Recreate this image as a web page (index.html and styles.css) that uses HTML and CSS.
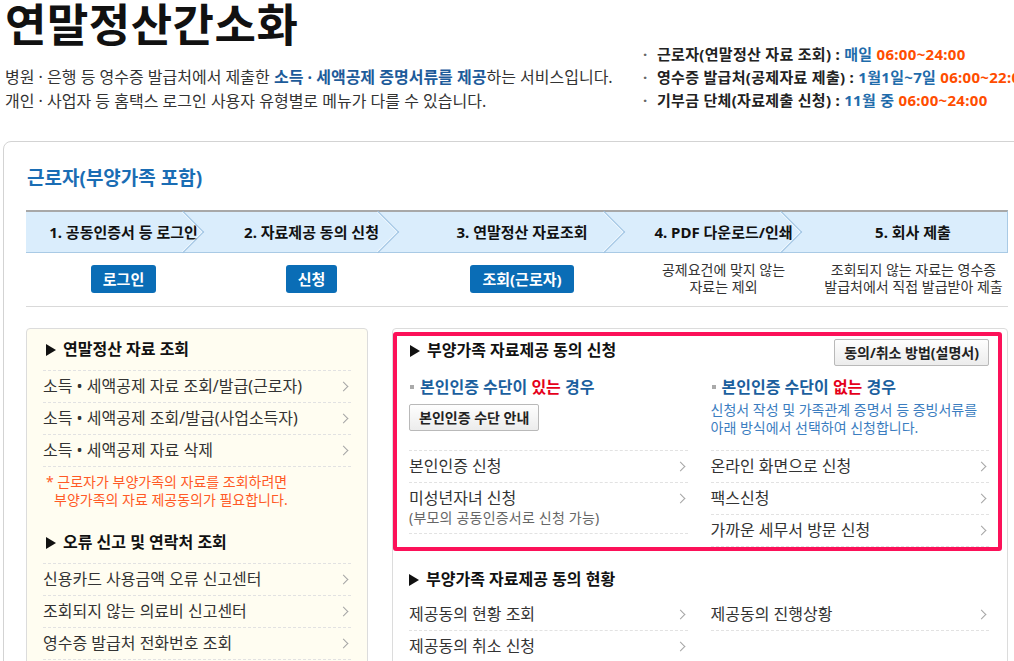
FILE: index.html
```html
<!DOCTYPE html>
<html lang="ko">
<head>
    <meta charset="UTF-8">
    <meta name="viewport" content="width=device-width, initial-scale=1.0">
    <title>연말정산간소화</title>
    <link rel="stylesheet" href="styles.css">
</head>
<body>
    <div class="page">
        <header class="top">
            <div class="intro">
                <h1>연말정산간소화</h1>
                <p>병원 · 은행 등 영수증 발급처에서 제출한 <strong>소득 · 세액공제 증명서류를 제공</strong>하는 서비스입니다.<br>
                개인 · 사업자 등 홈택스 로그인 사용자 유형별로 메뉴가 다를 수 있습니다.</p>
            </div>
            <ul class="hours">
                <li>근로자(연말정산 자료 조회) : <span class="day">매일</span> <span class="time">06:00~24:00</span></li>
                <li>영수증 발급처(공제자료 제출) : <span class="day">1월1일~7일</span> <span class="time">06:00~22:00</span></li>
                <li>기부금 단체(자료제출 신청) : <span class="day">11월 중</span> <span class="time">06:00~24:00</span></li>
            </ul>
        </header>

        <section class="box">
            <h2>근로자(부양가족 포함)</h2>

            <div class="steps">
                <div class="step">
                    <div class="step-label">1. 공동인증서 등 로그인</div>
                    <div class="step-act"><a class="btn-blue" href="#">로그인</a></div>
                </div>
                <div class="step">
                    <div class="step-label">2. 자료제공 동의 신청</div>
                    <div class="step-act"><a class="btn-blue" href="#">신청</a></div>
                </div>
                <div class="step">
                    <div class="step-label">3. 연말정산 자료조회</div>
                    <div class="step-act"><a class="btn-blue" href="#">조회(근로자)</a></div>
                </div>
                <div class="step">
                    <div class="step-label">4. PDF 다운로드/인쇄</div>
                    <div class="step-act"><p class="step-note">공제요건에 맞지 않는<br>자료는 제외</p></div>
                </div>
                <div class="step last">
                    <div class="step-label">5. 회사 제출</div>
                    <div class="step-act"><p class="step-note">조회되지 않는 자료는 영수증<br>발급처에서 직접 발급받아 제출</p></div>
                </div>
            </div>

            <div class="panels">
                <div class="panel panel-left">
                    <h3><span class="tri"></span>연말정산 자료 조회</h3>
                    <ul class="links bordered">
                        <li><a href="#">소득 • 세액공제 자료 조회/발급(근로자)</a></li>
                        <li><a href="#">소득 • 세액공제 조회/발급(사업소득자)</a></li>
                        <li><a href="#">소득 • 세액공제 자료 삭제</a></li>
                    </ul>
                    <p class="warn">* 근로자가 부양가족의 자료를 조회하려면<br>부양가족의 자료 제공동의가 필요합니다.</p>

                    <h3><span class="tri"></span>오류 신고 및 연락처 조회</h3>
                    <ul class="links bordered">
                        <li><a href="#">신용카드 사용금액 오류 신고센터</a></li>
                        <li><a href="#">조회되지 않는 의료비 신고센터</a></li>
                        <li><a href="#">영수증 발급처 전화번호 조회</a></li>
                    </ul>
                </div>

                <div class="panel panel-right">
                    <div class="consent highlight">
                        <div class="consent-head">
                            <h3><span class="tri"></span>부양가족 자료제공 동의 신청</h3>
                            <a class="btn-gray" href="#">동의/취소 방법(설명서)</a>
                        </div>
                        <div class="cols">
                            <div class="col">
                                <div class="case-head">
                                    <h4>본인인증 수단이 <em>있는</em> 경우</h4>
                                    <a class="btn-gray" href="#">본인인증 수단 안내</a>
                                </div>
                                <ul class="links bordered">
                                    <li><a href="#">본인인증 신청</a></li>
                                    <li><a href="#">미성년자녀 신청<small>(부모의 공동인증서로 신청 가능)</small></a></li>
                                </ul>
                            </div>
                            <div class="col">
                                <div class="case-head">
                                    <h4>본인인증 수단이 <em>없는</em> 경우</h4>
                                    <p class="case-desc">신청서 작성 및 가족관계 증명서 등 증빙서류를<br>아래 방식에서 선택하여 신청합니다.</p>
                                </div>
                                <ul class="links bordered">
                                    <li><a href="#">온라인 화면으로 신청</a></li>
                                    <li><a href="#">팩스신청</a></li>
                                    <li><a href="#">가까운 세무서 방문 신청</a></li>
                                </ul>
                            </div>
                        </div>
                    </div>

                    <div class="consent status">
                        <h3><span class="tri"></span>부양가족 자료제공 동의 현황</h3>
                        <div class="cols">
                            <ul class="links">
                                <li><a href="#">제공동의 현황 조회</a></li>
                                <li><a href="#">제공동의 취소 신청</a></li>
                            </ul>
                            <ul class="links">
                                <li><a href="#">제공동의 진행상황</a></li>
                            </ul>
                        </div>
                    </div>
                </div>
            </div>
        </section>
    </div>
</body>
</html>
```

FILE: styles.css
```css
html, body {
    margin: 0;
    padding: 0;
    overflow: hidden;
}
body {
    font-family: "Noto Sans", "Noto Sans CJK KR", sans-serif;
    color: #333;
    background-color: #fff;
}
a {
    color: inherit;
    text-decoration: none;
}
ul {
    list-style: none;
    margin: 0;
    padding: 0;
}
.page {
    width: 1040px;
}

/* header */
.top {
    display: flex;
}
.intro {
    width: 636px;
    padding-left: 5px;
}
h1 {
    margin: 0;
    font-size: 45px;
    line-height: 50px;
    font-weight: bold;
    color: #111;
    letter-spacing: 0.5px;
}
.intro p {
    margin: 15px 0 0;
    font-size: 16px;
    line-height: 24px;
    color: #333;
}
.intro strong {
    color: #1d5b9a;
}
.hours {
    margin-top: 43px;
    white-space: nowrap;
    font-size: 15px;
    line-height: 23px;
    font-weight: bold;
    color: #222;
    letter-spacing: 0.3px;
}
.hours li::before {
    content: "·";
    display: inline-block;
    width: 14px;
    padding-left: 2px;
    color: #666;
}
.hours .day {
    color: #1f6cab;
}
.hours .time {
    color: #ff4d00;
}

/* main box */
.box {
    margin: 28px 0 0 3px;
    width: 982px;
    padding: 24px 22px 0;
    border: 1px solid #d3d3d3;
    border-radius: 8px;
}
h2 {
    margin: 0 0 20px 1px;
    font-size: 19px;
    line-height: 24px;
    color: #1a6db4;
}

/* steps */
.steps {
    display: grid;
    grid-template-columns: 181px 195px 226px 177px 203px;
    padding-bottom: 11px;
    border-bottom: 1px solid #d9d9d9;
}
.step-label {
    position: relative;
    height: 40px;
    padding-left: 14px;
    border-top: 2px solid #a8a8a8;
    border-bottom: 1px solid #a9cae5;
    background-color: #daedfc;
    text-align: center;
    font-size: 15px;
    font-weight: bold;
    line-height: 40px;
    color: #111;
}
.step.last .step-label {
    border-right: 1px solid #a9cae5;
}
.step:not(.last) .step-label::after {
    content: "";
    position: absolute;
    z-index: 1;
    top: 5px;
    right: 9px;
    width: 29px;
    height: 29px;
    border-top: 1px solid #9fc3e2;
    border-right: 1px solid #9fc3e2;
    box-shadow: -1px 1px 0 rgba(255, 255, 255, 0.6) inset;
    transform: rotate(45deg);
}
.step-act {
    padding-top: 12px;
    padding-left: 14px;
    text-align: center;
}
.btn-blue {
    display: inline-block;
    height: 28px;
    padding: 0 12px;
    border-radius: 3px;
    background-color: #0a6db6;
    color: #fff;
    font-size: 15px;
    font-weight: bold;
    line-height: 28px;
}
.step-note {
    margin: -4px 0 0;
    font-size: 14px;
    line-height: 17px;
    color: #333;
}

/* panels */
.panels {
    display: flex;
    gap: 24px;
    margin-top: 21px;
}
.panel {
    border: 1px solid #dcdcdc;
    border-radius: 4px;
    height: 400px;
}
.panel-left {
    width: 308px;
    padding: 0 16px;
    background-color: #fffdf1;
}
.panel-right {
    width: 614px;
}
h3 {
    margin: 0;
    padding: 10px 3px 11px;
    font-size: 16px;
    line-height: 20px;
    color: #111;
}
.tri {
    display: inline-block;
    width: 0;
    height: 0;
    margin-right: 7px;
    border-left: 10px solid #111;
    border-top: 6px solid transparent;
    border-bottom: 6px solid transparent;
    vertical-align: -1px;
}
.links li {
    border-bottom: 1px dashed #e2e2e2;
}
.links.bordered {
    border-top: 1px dashed #e2e2e2;
}
.links a {
    display: flex;
    flex-wrap: wrap;
    padding: 5px 0;
    font-size: 16px;
    line-height: 21px;
    color: #333;
}
.links a::after {
    content: "";
    width: 6px;
    height: 6px;
    margin: 7px 4px 0 auto;
    border-top: 1.5px solid #a5a5a5;
    border-right: 1.5px solid #a5a5a5;
    transform: rotate(45deg);
    order: 1;
}
.links small {
    order: 2;
    width: 100%;
    font-size: 14px;
    line-height: 18px;
    color: #666;
    padding-bottom: 1px;
    letter-spacing: 0.2px;
}
.warn {
    margin: 6px 0 13px;
    padding-left: 11px;
    text-indent: -8px;
    font-size: 14px;
    line-height: 18px;
    color: #ff5a26;
}

/* consent sections */
.consent.highlight {
    margin: 3px 5px 0 0;
    padding: 1px 9px 0 12px;
    border: 4px solid #fc1159;
    border-radius: 3px;
}
.consent-head {
    display: flex;
    justify-content: space-between;
    align-items: flex-start;
}
.consent-head h3 {
    padding: 3px 0 0 1px;
}
.consent-head .btn-gray {
    margin-top: 2px;
}
.btn-gray {
    display: inline-block;
    height: 25px;
    padding: 0 9px;
    border: 1px solid #b9b9b9;
    border-radius: 2px;
    background: linear-gradient(#fefefe, #ececec);
    font-size: 14px;
    font-weight: bold;
    line-height: 25px;
    color: #222;
}
.cols {
    display: grid;
    grid-template-columns: 1fr 1fr;
    column-gap: 23px;
}
.highlight .cols {
    margin-top: 11px;
}
.case-head {
    height: 73px;
}
h4 {
    margin: 0 0 7px;
    font-size: 16px;
    line-height: 20px;
    color: #1b5f9e;
}
h4::before {
    content: "";
    display: inline-block;
    width: 4px;
    height: 4px;
    margin: 0 6px 0 1px;
    background-color: #aaa;
    vertical-align: 4px;
}
h4 em {
    font-style: normal;
    color: #e5001a;
}
.case-desc {
    margin: -3px 0 0;
    font-size: 14px;
    line-height: 18px;
    color: #3b7dc0;
}
.consent.status {
    padding: 18px 18px 0 16px;
}
.status h3 {
    padding: 0 0 10px;
}
```
